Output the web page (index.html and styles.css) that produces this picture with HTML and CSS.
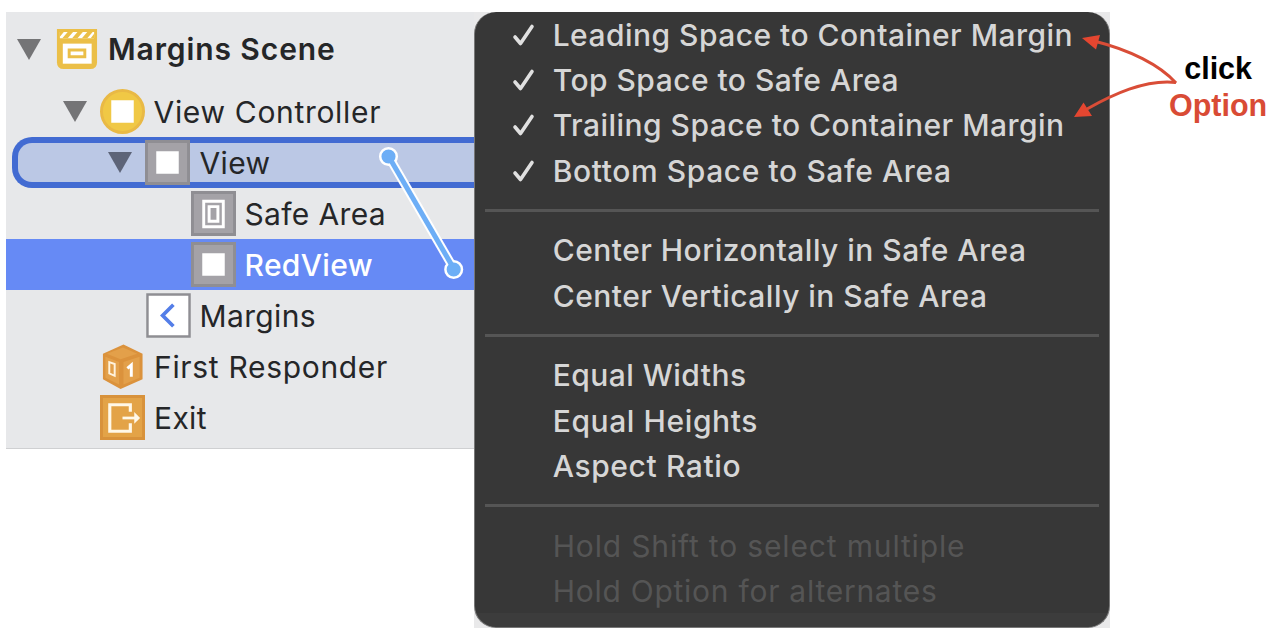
FILE: index.html
```html
<!DOCTYPE html>
<html lang="en">
<head>
<meta charset="utf-8">
<title>Margins Scene</title>
<link rel="stylesheet" href="styles.css">
</head>
<body>
<main class="stage">
  <section class="outline">
    <div class="row scene">
      <span class="tri"></span>
      <svg class="icon" viewBox="0 0 46 46"><path d="M3 2H44V36Q44 43 37 43H10Q3 43 3 36Z" fill="#ebbf48"/><path d="M6 5H41V11.500H6Z" fill="#fff"/><path d="M6 5H10L6 10ZM14 5H19.500L14 11.500H8.500ZM24 5H29.500L24 11.500H18.500ZM34 5H39.500L34 11.500H28.500ZM41 7V11.500H37.500Z" fill="#ebbf48"/><path d="M9 17H38.500V37.500H9Z" fill="#fff"/><path d="M15.500 23.500H31.500V30.500H15.500Z" fill="#fff" stroke="#ebbf48" stroke-width="3"/></svg>
      <span class="label">Margins Scene</span>
    </div>
    <div class="row controller">
      <span class="tri"></span>
      <svg class="icon" viewBox="0 0 46 46"><circle cx="23" cy="23" r="21.500" fill="#f0c845" stroke="#e9b945" stroke-width="3"/><path d="M11.500 11.500H34.500V34.500H11.500Z" fill="#fff"/></svg>
      <span class="label">View Controller</span>
    </div>
    <div class="row view">
      <span class="tri"></span>
      <svg class="icon" viewBox="0 0 46 46"><path d="M1.500 1.500H44.500V44.500H1.500Z" fill="#a4a2a7" stroke="#8f8e93" stroke-width="3"/><path d="M11.500 11.500H34.500V34.500H11.500Z" fill="#fff"/></svg>
      <span class="label">View</span>
    </div>
    <div class="row safe">
      <svg class="icon" viewBox="0 0 46 46"><path d="M1.500 1.500H44.500V44.500H1.500Z" fill="#a4a2a7" stroke="#8f8e93" stroke-width="3"/><path d="M13 10.500H33V36.500H13ZM18.500 16H27.500V31H18.500Z" fill="none" stroke="#fff" stroke-width="3"/></svg>
      <span class="label">Safe Area</span>
    </div>
    <div class="row red">
      <svg class="icon" viewBox="0 0 46 46"><path d="M1.500 1.500H44.500V44.500H1.500Z" fill="#a4a2a7" stroke="#8f8e93" stroke-width="3"/><path d="M11.500 11.500H34.500V34.500H11.500Z" fill="#fff"/></svg>
      <span class="label">RedView</span>
    </div>
    <div class="row margins">
      <svg class="icon" viewBox="0 0 46 46"><path d="M1.500 1.500H44.500V44.500H1.500Z" fill="#fff" stroke="#8f8e93" stroke-width="2.500"/><path d="M28 12L17 23L28 34" fill="none" stroke="#547ee8" stroke-width="3.800"/></svg>
      <span class="label">Margins</span>
    </div>
    <div class="row responder">
      <svg class="icon" viewBox="0 0 46 46"><path d="M24 .5L43.500 10V36L21 46L3 36V10Z" fill="#db923c"/><path d="M23.500 3.500L38 10L21 15.500L7 10Z" fill="#e3a04a"/><path d="M5.500 13L19.500 18.500V41.500L5.500 34.500ZM24 18.500L40.500 13V34.500L24 41.500Z" fill="#e3a04a"/><path d="M9.500 18.500L15 20.500V32.500L9.500 30Z" fill="none" stroke="#fff3dd" stroke-width="2"/><path d="M28 25L32 21.500V33.500" fill="none" stroke="#fff" stroke-width="3"/></svg>
      <span class="label">First Responder</span>
    </div>
    <div class="row exit">
      <svg class="icon" viewBox="0 0 46 46"><path d="M1.500 1.500H44.500V44.500H1.500Z" fill="#e3a347" stroke="#d8923b" stroke-width="3"/><path d="M31 17V10H10V37H31V29" fill="none" stroke="#fff8e8" stroke-width="3.200"/><path d="M23 23.500H36" stroke="#fff8e8" stroke-width="2.800"/><path d="M35 17.500L41 23.500L35 29.500Z" fill="#fff8e8"/></svg>
      <span class="label">Exit</span>
    </div>
  </section>
  <section class="menu-area">
    <div class="menu">
      <div class="item"><svg class="check" viewBox="0 0 24 24"><path d="M3 14L8.500 20.500L20 3.500"/></svg><span class="label">Leading Space to Container Margin</span></div>
      <div class="item"><svg class="check" viewBox="0 0 24 24"><path d="M3 14L8.500 20.500L20 3.500"/></svg><span class="label">Top Space to Safe Area</span></div>
      <div class="item"><svg class="check" viewBox="0 0 24 24"><path d="M3 14L8.500 20.500L20 3.500"/></svg><span class="label">Trailing Space to Container Margin</span></div>
      <div class="item wide"><svg class="check" viewBox="0 0 24 24"><path d="M3 14L8.500 20.500L20 3.500"/></svg><span class="label">Bottom Space to Safe Area</span></div>
      <div class="separator"></div>
      <div class="item"><span class="label">Center Horizontally in Safe Area</span></div>
      <div class="item"><span class="label">Center Vertically in Safe Area</span></div>
      <div class="separator"></div>
      <div class="item"><span class="label">Equal Widths</span></div>
      <div class="item wide"><span class="label">Equal Heights</span></div>
      <div class="item wide"><span class="label">Aspect Ratio</span></div>
      <div class="separator"></div>
      <div class="item hint"><span class="label">Hold Shift to select multiple</span></div>
      <div class="item hint alternates"><span class="label">Hold Option for alternates</span></div>
    </div>
  </section>
  <aside class="note"><span>click</span><span class="option">Option</span></aside>
  <svg class="overlay" viewBox="0 0 1280 636">
    <g class="connector"><path class="halo" d="M389 157L454 269"/><circle cx="388.500" cy="156.500" r="8.300"/><circle cx="453.700" cy="269.500" r="8.300"/><path class="core" d="M389 157L454 269"/></g>
    <g class="arrows"><path class="curve" d="M1176 83C1160 65 1130 50 1094 41"/><path class="curve" d="M1176 82.500C1145 79 1112 95 1087 109"/><path d="M1082 38L1100 35L1096 49.500ZM1074 117L1083.500 102.500L1092 116Z"/></g>
  </svg>
</main>
</body>
</html>
```
FILE: styles.css
```css
body { margin: 0; background: #fff; font-family: Inter, "Liberation Sans", sans-serif; }
.stage { position: relative; box-sizing: border-box; width: 1280px; height: 636px; padding: 12px 0 8px 6px; display: flex; align-items: flex-start; overflow: hidden; }
.outline { box-sizing: border-box; width: 468px; height: 437px; background: #e7e8ea; border-bottom: 1px solid #cfd0d2; color: #252628; font-size: 30px; flex: none; }
.row { box-sizing: border-box; height: 51px; display: flex; align-items: center; white-space: nowrap; letter-spacing: .35px; }
.icon { width: 45px; height: 45px; flex: none; }
.row .label { margin-left: 9px; }
.tri { border: solid transparent; border-width: 21px 12.5px 0; border-top-color: #747476; margin-right: 13px; }
.scene { height: 74px; padding-left: 11px; font-weight: 600; letter-spacing: .9px; }
.controller { padding-left: 56.500px; letter-spacing: .68px; }
.view { margin-left: 6px; padding-left: 89.500px; background: #bbc8e5; border: solid #426bd2; border-width: 6px 0 6px 6px; border-radius: 20px 0 0 20px; }
.view .tri { border-top-color: #5d6478; }
.view .label { margin-left: 10px; }
.safe { padding-left: 184.500px; }
.red { padding-left: 184.500px; background: #668af5; color: #fff; font-weight: 500; }
.margins { padding-left: 139.500px; }
.responder, .exit { padding-left: 94px; }
.responder { letter-spacing: .68px; }
.menu-area { width: 636px; height: 616px; background: #e9e9ea; flex: none; }
.menu { box-sizing: border-box; height: 616px; border-radius: 22px; background: linear-gradient(#373737 601px, #3c3c3c 601px); border: solid #777; border-width: 0 1px 1px; color: #d6d6d6; font-size: 30px; font-weight: 500; letter-spacing: .47px; }
.item { height: 45.300px; display: flex; align-items: center; white-space: nowrap; padding-left: 37px; }
.wide { letter-spacing: .6px; }
.check { width: 24px; height: 24px; fill: none; stroke: #e0e0e0; stroke-width: 3.600; stroke-linecap: round; stroke-linejoin: round; margin-right: 16.700px; }
.item > .label:first-child { margin-left: 40.700px; }
.hint { color: #555; font-weight: 400; letter-spacing: .84px; }
.alternates { letter-spacing: .74px; }
.separator { height: 34.500px; margin: 0 10px; display: flex; align-items: center; }
.separator::after { content: ""; height: 3px; width: 100%; background: #555; }
.note { margin: 38px 0 0 59px; display: flex; flex-direction: column; align-items: center; font: bold 30.500px/37px "Liberation Sans", sans-serif; color: #000; }
.option { color: #d94b35; }
.overlay { position: absolute; left: 0; top: 0; width: 1280px; height: 636px; }
.connector circle { fill: #6daef6; stroke: #fff; stroke-width: 2.500; }
.halo { stroke: #fff; stroke-width: 9; }
.core { stroke: #6daef6; stroke-width: 5; }
.arrows { fill: #e44630; }
.curve { fill: none; stroke: #d94d37; stroke-width: 3; }
```
